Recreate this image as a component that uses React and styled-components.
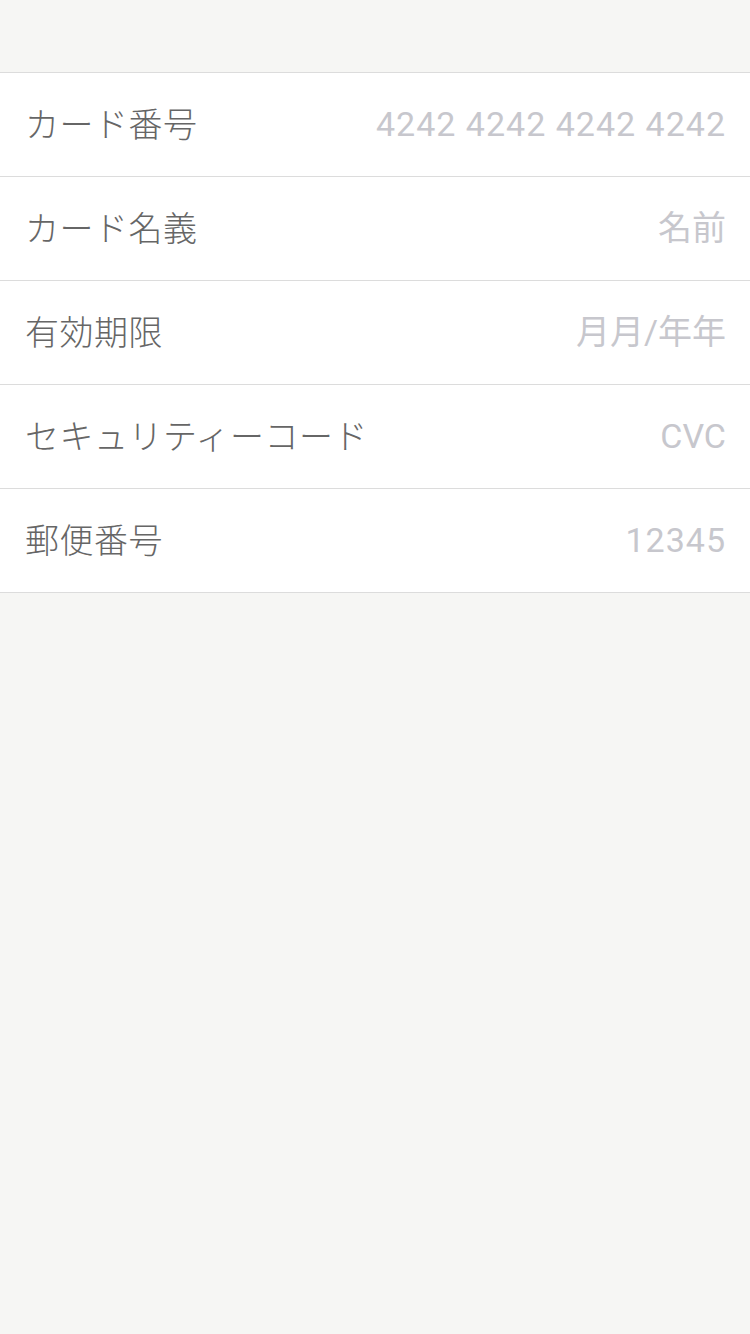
import React from 'react'
import styled, {createGlobalStyle} from 'styled-components'

const GlobalStyle = createGlobalStyle`
  html, body {
    margin: 0;
    padding: 0;
    background: #f6f6f4;
  }
  body {
    font-family: "Noto Sans CJK JP", "Noto Sans", sans-serif;
  }
`;

const Page = styled.div`
  min-height: 1334px;
  background: #f6f6f4;
  padding-top: 72px;
  box-sizing: border-box;
`;

const Form = styled.div`
  background: #fff;
  border-top: 1px solid #dcdcdc;
`;

const Row = styled.label`
  display: flex;
  align-items: center;
  justify-content: space-between;
  box-sizing: border-box;
  height: 104px;
  padding: 0 24px 5px 25px;
  border-bottom: 1px solid #dcdcdc;
`;

const Label = styled.span`
  font-size: 34px;
  font-weight: 300;
  letter-spacing: 0.5px;
  color: #666;
  white-space: nowrap;
`;

const Input = styled.input`
  flex: 1;
  min-width: 0;
  border: none;
  outline: none;
  background: transparent;
  text-align: right;
  font-family: Roboto, "Noto Sans CJK JP", sans-serif;
  font-size: 34px;
  letter-spacing: ${p => p.$spacing || '0px'};
  color: #333;
  padding: 4px 0 0;
  &::placeholder {
    color: #c7c7cd;
  }
`;

const fields = [
    {label: 'カード番号', placeholder: '4242 4242 4242 4242', spacing: '1px'},
    {label: 'カード名義', placeholder: '名前'},
    {label: '有効期限', placeholder: '月月/年年'},
    {label: 'セキュリティーコード', placeholder: 'CVC'},
    {label: '郵便番号', placeholder: '12345', spacing: '1px'},
];

const App = () => {
    return (
        <Page>
            <GlobalStyle />
            <Form>
                {fields.map((f) => {
                    return (
                        <Row key={f.label}>
                            <Label>{f.label}</Label>
                            <Input placeholder={f.placeholder} $spacing={f.spacing} />
                        </Row>
                    )
                })}
            </Form>
        </Page>
    )
}

export default App;
